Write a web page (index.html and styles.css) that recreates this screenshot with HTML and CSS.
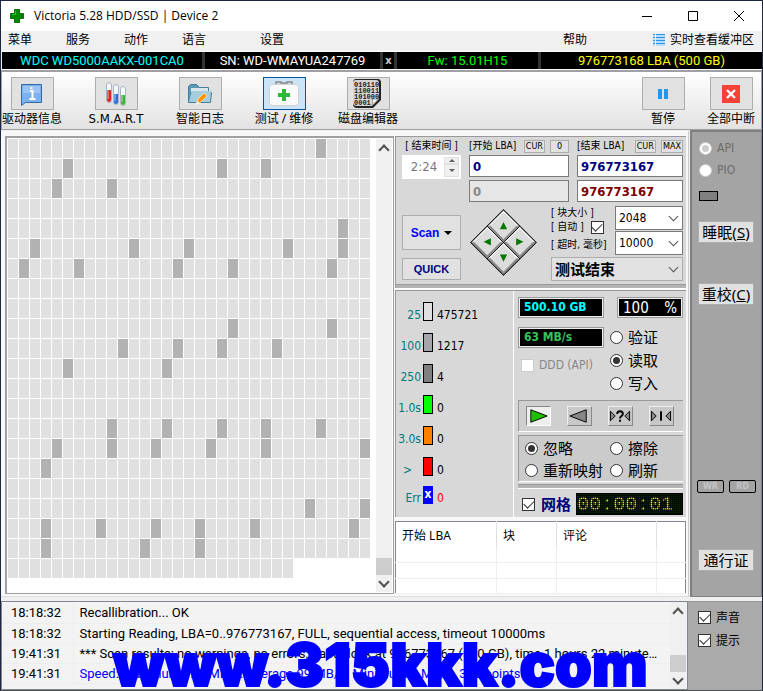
FILE: index.html
```html
<!DOCTYPE html>
<html lang="zh-CN">
<head>
<meta charset="utf-8">
<title>Victoria 5.28 HDD/SSD | Device 2</title>
<link rel="stylesheet" href="styles.css">
</head>
<body>
<header class="titlebar">
  <svg class="app-icon" viewBox="0 0 14 14"><path d="M4.500 .5h5v4h4v5h-4v4h-5v-4h-4v-5h4z" fill="#008a00" stroke="#087008"/><path d="M5.500 2v3.500H2" fill="none" stroke="#30c030"/></svg>
  <h1>Victoria 5.28 HDD/SSD | Device 2</h1>
  <div class="window-buttons">
    <button aria-label="最小化"><svg viewBox="0 0 12 12"><path d="M1 6.500h10" /></svg></button>
    <button aria-label="最大化"><svg viewBox="0 0 12 12"><path d="M1.500 1.500h9v9h-9z"/></svg></button>
    <button aria-label="关闭"><svg viewBox="0 0 12 12"><path d="M1 1l10 10M11 1L1 11"/></svg></button>
  </div>
</header>

<nav class="menu">
  <a href="#">菜单</a><a href="#">服务</a><a href="#">动作</a><a href="#">语言</a><a href="#" class="settings">设置</a>
  <a href="#" class="help">帮助</a>
  <a href="#" class="buffer"><svg viewBox="0 0 12 12"><path d="M0 .5h2M0 3.500h2M0 6.500h2M0 9.500h2M3 .5h9M3 3.500h9M3 6.500h9M3 9.500h9" stroke="#2196f3" stroke-width="1"/><path d="M3 2h9M3 5h9M3 8h9M3 11h9M0 2h2M0 5h2M0 8h2M0 11h2" stroke="#8cc6f5"/></svg>实时查看缓冲区</a>
</nav>

<section class="drive">
  <span class="model">WDC WD5000AAKX-001CA0</span>
  <span class="serial">SN: WD-WMAYUA247769</span>
  <button class="clear">x</button>
  <span class="firmware">Fw: 15.01H15</span>
  <span class="capacity">976773168 LBA (500 GB)</span>
</section>

<section class="toolbar">
  <button class="tool"><span class="tile"><svg viewBox="0 0 24 24"><path d="M1.500 2.500h20v18h-16l-4 3z" fill="#7db0ee" stroke="#34699f"/><path d="M3 4h17v7H3z" fill="#9bc4f5"/><path d="M10 9h2.500v8M9.500 17h6" fill="none" stroke="#fff" stroke-width="2"/><path d="M10.500 5h2v2h-2z" fill="#fff"/></svg></span>驱动器信息</button>
  <button class="tool latin"><span class="tile"><svg viewBox="0 0 24 24"><g stroke="#aab4c4"><rect x="2.500" y=".5" width="5" height="20" rx="2.500" fill="#f4f4fa"/><rect x="9.500" y="2.500" width="5" height="20" rx="2.500" fill="#eef4ff"/><rect x="16.500" y="4.500" width="5" height="19" rx="2.500" fill="#f4fff4"/></g><path d="M3 8h4v10a2 2 0 0 1-4 0z" fill="#d82828"/><path d="M10 12h4v8a2 2 0 0 1-4 0z" fill="#2c70d8"/><path d="M17 13h4v8a2 2 0 0 1-4 0z" fill="#3bb634"/><path d="M4 2v15M11 4v15M18 6v14" stroke="#fff" opacity=".6"/></svg></span>S.M.A.R.T</button>
  <button class="tool"><span class="tile"><svg viewBox="0 0 24 24"><path d="M.5 20.500v-16l2-2h6l3 3h9v5h3l-1 10z" fill="#5a98b8" stroke="#43809e"/><path d="M3 6h17v4H3z" fill="#d8e6ea"/><path d="M1 20L4 9h19l-1 11z" fill="#a5cdde"/><path d="M8 23l2-6 6-6 3 3-6 6z" fill="#ff9300" stroke="#fff" stroke-width=".6"/><path d="M8 23l1-4 3 2z" fill="#fff2d6"/></svg></span>智能日志</button>
  <button class="tool selected"><span class="tile"><svg class="wide" viewBox="0 0 32 28"><path d="M8 5V2h5v1h6V2h5v3" fill="none" stroke="#888" stroke-width="1.500"/><rect x="1.500" y="4.500" width="29" height="21" rx="3" fill="#fafafa" stroke="#d2d2d2"/><path d="M14 9h4v4h4v4h-4v4h-4v-4h-4v-4h4z" fill="#2eb83a"/></svg></span>测试 / 维修</button>
  <button class="tool"><span class="tile"><svg class="wide" viewBox="0 0 32 30"><path d="M4 0h22q3 0 3 4v17l-8 8H5q-4 0-4-4V4q0-4 3-4z" fill="#222"/><path d="M4 1h20q3 0 3 3v16l-7 7H5q-4 0-4-3V4q0-3 3-3z" fill="#d5d5d5"/><path d="M20 27q2-4 0-7 4 1 7-1z" fill="#fff" stroke="#666" stroke-width=".6"/><g class="bits"><text x="2" y="8">010110</text><text x="2" y="14">110011</text><text x="2" y="20">101000</text><text x="2" y="26">0001</text></g></svg></span>磁盘编辑器</button>
  <div class="tools-right">
    <button class="tool"><span class="tile"><svg class="small" viewBox="0 0 20 20"><path d="M5 5h4v10H5zM11 5h4v10h-4z" fill="#2196f3"/></svg></span>暂停</button>
    <button class="tool"><span class="tile"><svg class="small" viewBox="0 0 20 20"><path d="M1 1h18v18H1z" fill="#f44336"/><path d="M6 6l8 8M14 6l-8 8" stroke="#fff" stroke-width="2.400"/></svg></span>全部中断</button>
  </div>
</section>

<main class="work">
  <div class="stage">
    <section class="map">
      <div class="cells" id="cells"></div>
      <div class="scroll"><i class="up"></i><b></b><i class="down"></i></div>
    </section>

    <div class="side">
      <section class="setup">
        <div class="range">
          <label class="cap" for="end-time">[ 结束时间 ]</label>
          <div class="cap-row"><label for="start-lba">[开始 LBA]</label><button>CUR</button><button class="zero">0</button></div>
          <div class="cap-row"><label for="end-lba">[结束 LBA]</label><button>CUR</button><button>MAX</button></div>
          <div class="spin"><input id="end-time" value="2:24" disabled><span><button aria-label="增加" class="inc"></button><button aria-label="减少" class="dec"></button></span></div>
          <input id="start-lba" class="field" value="0">
          <input id="end-lba" class="field" value="976773167">
          <input class="field off second" value="0" disabled aria-label="当前 LBA">
          <input class="field red" value="976773167" aria-label="末尾 LBA">
        </div>
        <div class="actions">
          <div class="runs">
            <button class="scan">Scan<i></i></button>
            <button class="quick">QUICK</button>
          </div>
          <div class="pad">
            <div class="pad-keys">
              <button aria-label="上"><svg class="n" viewBox="0 0 10 10"><path d="M5 1l4 8H1z"/></svg></button>
              <button aria-label="右"><svg class="e" viewBox="0 0 10 10"><path d="M5 1l4 8H1z"/></svg></button>
              <button aria-label="左"><svg class="w" viewBox="0 0 10 10"><path d="M5 1l4 8H1z"/></svg></button>
              <button aria-label="下"><svg class="s" viewBox="0 0 10 10"><path d="M5 1l4 8H1z"/></svg></button>
            </div>
          </div>
          <div class="options">
            <div class="option-labels">
              <label for="block">[ 块大小 ]</label>
              <label class="auto">[ 自动 ]<input type="checkbox" checked></label>
              <label for="timeout">[ 超时, 毫秒]</label>
            </div>
            <div class="option-values">
              <span class="pick"><select id="block"><option>2048</option></select></span>
              <span class="pick"><select id="timeout"><option>10000</option></select></span>
            </div>
            <span class="pick finish"><select aria-label="完成后"><option>测试结束</option></select></span>
          </div>
        </div>
        <div class="rule"></div>
      </section>

      <section class="status">
        <ul class="timing">
          <li><span>25</span><i class="t25"></i><b>475721</b></li>
          <li><span>100</span><i class="t100"></i><b>1217</b></li>
          <li><span>250</span><i class="t250"></i><b>4</b></li>
          <li><span>1.0s</span><i class="t1"></i><b>0</b></li>
          <li><span>3.0s</span><i class="t3"></i><b>0</b></li>
          <li><span class="over">&gt;</span><i class="tover"></i><b>0</b></li>
          <li class="err"><span>Err</span><i>x</i><b>0</b></li>
        </ul>
        <div class="readout">
          <div class="top">
            <div class="left">
              <output class="lcd size">500.10 GB</output>
              <output class="lcd speed">63 MB/s</output>
              <label class="ddd"><input type="checkbox" disabled>DDD (API)</label>
            </div>
            <div class="right">
              <output class="lcd percent"><span>100</span><span>%</span></output>
              <label><input type="radio" name="op">验证</label>
              <label><input type="radio" name="op" checked>读取</label>
              <label><input type="radio" name="op">写入</label>
            </div>
          </div>
          <div class="transport">
            <button class="pressed" aria-label="正向"><svg viewBox="0 0 24 18"><path d="M4 2.500l17 6.500-17 6.500z" fill="#20c000" stroke="#000"/></svg></button>
            <button aria-label="反向"><svg viewBox="0 0 24 18"><path d="M19 2.500L2 9l17 6.500z" fill="#868686" stroke="#000"/></svg></button>
            <button aria-label="随机"><svg viewBox="0 0 24 18"><path d="M1.500 4v10l5-5zM21.500 4v10l-5-5z" fill="#868686" stroke="#000"/><path d="M8.500 7q0-3 3-3t3 3q0 1-2 2.500-1 .7-1 2M11.500 13v2" fill="none" stroke="#000" stroke-width="2"/></svg></button>
            <button aria-label="蝶式"><svg viewBox="0 0 24 18"><path d="M1.500 4v10l5-5zM21.500 4v10l-5-5z" fill="#868686" stroke="#000"/><path d="M11.500 4v10" stroke="#000" stroke-width="2"/></svg></button>
          </div>
          <div class="defects">
            <label><input type="radio" name="defect" checked>忽略</label>
            <label><input type="radio" name="defect">擦除</label>
            <label><input type="radio" name="defect">重新映射</label>
            <label><input type="radio" name="defect">刷新</label>
          </div>
          <div class="rule"></div>
          <div class="clock-row">
            <label><input type="checkbox" checked>网格</label>
            <output class="clock">00:00:01</output>
          </div>
        </div>
      </section>

      <table class="defect-list">
        <colgroup><col class="c1"><col class="c2"><col class="c3"><col></colgroup>
        <thead><tr><th>开始 LBA</th><th>块</th><th>评论</th><th></th></tr></thead>
        <tbody><tr><td></td><td></td><td></td><td></td></tr><tr><td></td><td></td><td></td><td></td></tr><tr><td></td><td></td><td></td><td></td></tr></tbody>
      </table>
    </div>
  </div>

  <aside class="rail">
    <label><input type="radio" name="bus" checked disabled>API</label>
    <label><input type="radio" name="bus" disabled>PIO</label>
    <div class="lamp"></div>
    <button class="sleep">睡眠(<u>S</u>)</button>
    <button class="recal">重校(<u>C</u>)</button>
    <div class="leds"><span>WR</span><span>RD</span></div>
    <button class="pass">通行证</button>
  </aside>
</main>

<footer class="bottom">
  <section class="log">
    <table>
      <colgroup><col class="time"><col></colgroup>
      <tbody>
      <tr><td>18:18:32</td><td>Recallibration... OK</td></tr>
      <tr><td>18:18:32</td><td>Starting Reading, LBA=0..976773167, FULL, sequential access, timeout 10000ms</td></tr>
      <tr><td>19:41:31</td><td>*** Scan results: no warnings, no errors. Last block at 976773167 (500 GB), time 1 hours 22 minutes 58 seconds.</td></tr>
      <tr class="speed-row"><td>19:41:31</td><td>Speed: Maximum 125 MB/s. Average 99 MB/s. Minimum 2 MB/s. 388 points.</td></tr>
      </tbody>
    </table>
    <div class="scroll"><i class="up"></i><b></b><i class="down"></i></div>
    <div class="site">www.315kkk.com</div>
  </section>
  <div class="toggles">
    <label><input type="checkbox" checked>声音</label>
    <label><input type="checkbox" checked>提示</label>
  </div>
</footer>
<script src="map.js"></script>
</body>
</html>
```
FILE: styles.css
```css
* { box-sizing: border-box; }
html { --ui: "DejaVu Sans Condensed", "Noto Sans", "Noto Sans CJK SC", sans-serif; --text: Roboto, "Noto Sans CJK SC", sans-serif; --cjk: "Noto Sans", "Noto Sans CJK SC", sans-serif; --edge: #a0a0a4; }
body {
  margin: 0; min-height: 100vh; display: flex; flex-direction: column;
  background: #f0f0f0; border: 1px solid #1c2740; border-bottom-color: #4a4f50;
  font: 12px/16px var(--ui); color: #000;
}
button, input, select { font: inherit; color: inherit; margin: 0; padding: 0; border-radius: 0; }
button { background: #e1e1e1; border: 1px solid #adadad; }
h1, ul { margin: 0; padding: 0; list-style: none; }
a { color: inherit; text-decoration: none; }
i, b { font-style: normal; font-weight: normal; }
table { border-collapse: collapse; table-layout: fixed; width: 100%; }

/* title bar */
.titlebar { display: flex; align-items: center; height: 30px; background: #fff; padding-left: 9px; }
.app-icon { width: 14px; height: 14px; margin-right: 10px; }
h1 { font: 12px/16px "Open Sans", sans-serif; }
.window-buttons { display: flex; margin-left: auto; }
.window-buttons button { width: 46px; height: 28px; border: 0; background: none; display: grid; place-items: center; }
.window-buttons svg { width: 12px; height: 12px; fill: none; stroke: #000; }

/* menu */
.menu { display: flex; align-items: center; gap: 34px; height: 20px; padding: 0 8px 2px 7px; font-family: var(--cjk); }
.menu .settings { margin-left: 20px; }
.menu .help { margin-left: auto; }
.menu .buffer { display: flex; align-items: center; gap: 5px; margin-left: 32px; }
.buffer svg { width: 12px; height: 12px; }

/* drive line */
.drive {
  display: grid; grid-template-columns: 200px 175px 11px 141px 1fr; column-gap: 3px; height: 19px;
  margin-left: 1px; background: #333; border-top: 1px solid #fff; border-bottom: 1px solid #fff; font: 13px/17px var(--text);
}
.drive > * { background: #000; text-align: center; border: 0; white-space: nowrap; }
.model { color: #0ff; }
.serial { color: #fff; }
.clear { color: #ccc; font: bold 11px/16px var(--ui); }
.firmware { color: #0f0; }
.capacity { color: #ff0; }

/* toolbar */
.toolbar {
  display: flex; gap: 24px; height: 60px; padding: 5px 6px 0 0;
  background: linear-gradient(#fff, #e2e2e2); border: solid var(--edge); border-width: 2px 1px 1px;
}
.tool { width: 60px; height: 52px; display: flex; flex-direction: column; align-items: center; background: none; border: 0; font: 12px/18px var(--cjk); white-space: nowrap; }
.tool.latin { font-size: 13px; font-family: var(--ui); }
.tile { display: grid; place-items: center; width: 43px; height: 33px; background: #e1e1e1; border: 1px solid #adadad; flex: none; }
.selected .tile { background: #cce4f7; border-color: #0054a0; }
.tile svg { width: 24px; height: 24px; }
.tile svg.wide { width: 32px; height: 30px; }
.tile svg.small { width: 20px; height: 20px; }
.bits { font: bold 7px "Liberation Mono", monospace; fill: #222; }
.tools-right { display: flex; gap: 20px; margin-left: auto; }
.tools-right .tool { width: 48px; }

/* work area */
.work { display: flex; flex: 1; margin-bottom: 4px; }
.stage { flex: 1; display: flex; gap: 1px; padding: 5px 2px 2px 4px; margin: 1px 1px 0 0; background: #f8f8f8; border-right: 1px solid #ccc; border-bottom: 1px solid #ddd; min-width: 0; }
.map { flex: 1; display: flex; align-items: stretch; padding: 1px; background: #fff; border: 1px solid var(--edge); border-width: 2px 1px 1px 2px; }
.cells { flex: 1; display: grid; grid-template-columns: repeat(33, 1fr); grid-auto-rows: 19px; gap: 1px; align-content: start; margin-right: 6px; }
.cells i { background: #e0e0e0; }
.cells .slow { background: #b2b2b2; }
.scroll { width: 16px; display: flex; flex-direction: column; align-items: center; background: #f0f0f0; flex: none; }
.scroll b { width: 16px; height: 17px; margin-top: auto; background: #cdcdcd; }
.scroll i { height: 17px; width: 16px; display: grid; place-items: center; }
.scroll i::before { content: ""; width: 6px; height: 6px; border: solid #505050; border-width: 2px 0 0 2px; transform: rotate(45deg); margin-top: 4px; }
.scroll .down::before { border-width: 0 2px 2px 0; margin: 0 0 4px; }

.side { width: 291px; flex: none; display: flex; flex-direction: column; }
.setup, .status { background: #d8d8d8; border: solid #999; border-width: 1px 0 0 1px; }
.setup { padding-top: 3px; margin-bottom: 2px; }
.rule { height: 4px; background: #b4b4b4; border-top: 1px solid #999; box-shadow: 0 1px #fff; }

.range { display: grid; grid-template-columns: 59px 100px 106px; column-gap: 8px; row-gap: 3px; padding: 0 3px 0 6px; align-items: start; }
.cap, .cap-row { font-size: 10px; line-height: 12px; height: 12px; white-space: nowrap; }
.cap { text-align: center; }
.cap-row { display: flex; }
.cap-row label { margin-right: auto; }
.cap-row button { min-width: 19px; height: 13px; padding: 0 1px; margin-left: 5px; font-size: 9px; line-height: 11px; }
.field { width: 100%; height: 22px; padding: 0 3px; border: 1px solid #7a7a7a; background: #fff; font-size: 13px; font-weight: bold; color: #000080; }
.off { background: #e6e6e6; color: #888; }
.second { grid-column: 2; }
.red { color: #800000; }
.spin { display: flex; height: 24px; padding: 2px; background: #fff; margin-bottom: -2px; }
.spin input { flex: 1; min-width: 0; width: 10px; border: 0; background: none; color: #777; font-size: 13px; text-align: center; }
.spin span { display: grid; width: 15px; }
.spin button { border-color: #e0e0e0; background: #f0f0f0; display: grid; place-items: center; }
.spin button::before { content: ""; border: 3px solid transparent; border-bottom-color: #606060; margin-top: -3px; }
.spin .dec::before { border-bottom-color: transparent; border-top-color: #606060; margin: 3px 0 0; }

.actions { display: grid; grid-template-columns: 59px 67px 1fr; column-gap: 9px; padding: 4px 3px 3px 6px; }
.runs { display: flex; flex-direction: column; justify-content: space-between; padding: 9px 0 1px; }
.scan, .quick { font-family: "Liberation Sans", sans-serif; font-weight: bold; }
.scan { height: 35px; font-size: 12px; color: #00f; display: flex; align-items: center; justify-content: center; gap: 5px; }
.scan i { border: 4px solid transparent; border-top-color: #000; border-bottom: 0; }
.quick { height: 22px; font-size: 11px; color: #000080; }
.pad { height: 67px; display: grid; place-items: center; margin-top: 3px; }
.pad-keys { width: 47px; height: 47px; display: grid; grid-template-columns: 1fr 1fr; gap: 1px; transform: rotate(45deg); background: #000; border: 1px solid #222; }
.pad-keys button { background: #dcdcdc; border: solid; border-width: 1px 2px 2px 1px; border-color: #fff #888 #888 #fff; display: grid; place-items: center; }
.pad-keys svg { width: 9px; height: 9px; fill: #007800; transform: rotate(-45deg); }
.pad-keys .e { transform: rotate(45deg); }
.pad-keys .w { transform: rotate(-135deg); }
.pad-keys .s { transform: rotate(135deg); }

.options { display: grid; grid-template-columns: 64px 68px; justify-content: end; row-gap: 2px; }
.option-labels { font-size: 10px; line-height: 14px; white-space: nowrap; display: flex; flex-direction: column; }
.option-labels .auto { display: flex; align-items: center; gap: 7px; height: 14px; margin-bottom: 4px; }
.option-values { display: grid; gap: 1px; }
.pick { position: relative; display: block; }
.pick select { appearance: none; display: block; width: 100%; height: 24px; padding: 0 18px 0 3px; background: #fff; border: 1px solid #7a7a7a; }
.pick::after { content: ""; position: absolute; right: 6px; top: 7px; width: 6px; height: 6px; border: solid #555; border-width: 0 1px 1px 0; transform: rotate(45deg); }
.finish { grid-column: 1 / 3; }
.finish select { background: #e1e1e1; border-color: #adadad; font: bold 15px/20px var(--cjk); }

/* check boxes and radios */
input[type="checkbox"], input[type="radio"] { appearance: none; flex: none; width: 13px; height: 13px; background: #fff; border: 1px solid #333; display: grid; place-items: center; }
input[type="radio"] { border-radius: 50%; }
input[type="checkbox"]:checked::before { content: ""; width: 9px; height: 5px; border: solid #333; border-width: 0 0 1px 1px; transform: rotate(-45deg); margin-top: -3px; }
input[type="radio"]:checked::before { content: ""; width: 7px; height: 7px; border-radius: 50%; background: #333; }
input[type="checkbox"]:disabled, input[type="radio"]:disabled { border-color: #ccc; }
input[type="radio"]:disabled:checked::before { background: #ccc; }

/* status */
.status { display: flex; flex: none; }
.timing { width: 118px; padding-top: 5px; border-right: 1px solid #fff; }
.timing li { height: 31px; display: grid; grid-template-columns: 25px 10px 1fr; column-gap: 2px; align-items: center; }
.timing span { color: #007878; text-align: right; padding-top: 6px; }
.timing .over { padding-right: 9px; }
.timing i { height: 19px; border: 1px solid #000; }
.timing b { padding: 6px 0 0 2px; }
.t25 { background: #e0e0e0; } .t100 { background: #a4a4aa; } .t250 { background: #808080; }
.t1 { background: #0f0; } .t3 { background: #ff8000; } .tover { background: #f00; }
.timing .err { height: 26px; }
.timing .err i { background: #00f; color: #fff; border: 0; height: 18px; font-weight: bold; text-align: center; }
.timing .err b { color: #f00; }

.readout { flex: 1; padding: 6px 3px 2px 4px; }
.top { display: flex; justify-content: space-between; height: 103px; }
.left { width: 86px; display: flex; flex-direction: column; gap: 9px; }
.lcd { display: block; height: 21px; padding: 0 5px; line-height: 19px; background: #000; border: 1px solid #999; box-shadow: inset 0 0 0 1px #eee; }
.size, .speed { font-weight: bold; font-size: 12px; color: #0ff; }
.speed { color: #35c35b; }
.ddd { display: flex; align-items: center; gap: 5px; padding-left: 3px; color: #888; white-space: nowrap; }
.right { width: 73px; font: 15px/23px var(--cjk); }
.percent { width: 66px; margin: 0 0 8px auto; display: flex; justify-content: space-between; color: #fff; font: 15px/20px var(--ui); }
.right label, .defects label { display: flex; align-items: center; gap: 5px; }
.transport { display: flex; justify-content: space-between; align-items: center; height: 32px; padding: 0 9px 0 7px; background: #cfcfcf; border: solid; border-width: 1px 0 1px 1px; border-color: #999 #fff #fff #999; }
.transport button { width: 25px; height: 20px; border-color: #eee #888 #888 #eee; background: #c8c8c8; }
.transport .pressed { border-color: #888 #fff #fff #888; background: #eee; }
.transport svg { display: block; width: 23px; height: 18px; }
.defects { display: grid; grid-template-columns: 85px 1fr; margin-top: 3px; padding: 1px 0 0 6px; background: #cbcbcb; border: solid; border-width: 1px 0 1px 1px; border-color: #999 #fff #fff #999; font: 15px/22px var(--cjk); white-space: nowrap; }
.readout .rule { margin-top: 2px; }
.clock-row { display: flex; justify-content: space-between; align-items: center; margin-top: 5px; }
.clock-row label { display: flex; align-items: center; gap: 6px; padding-left: 4px; color: #000080; font: bold 15px/21px var(--cjk); }
.clock { position: relative; width: 107px; height: 22px; background: #042804; color: #ff0; font: 20px/21px "Liberation Mono", monospace; border: 1px solid #000; }
.clock::after { content: ""; position: absolute; inset: 0; background: repeating-linear-gradient(90deg, transparent 0 1px, rgba(0,0,0,.6) 1px 2px), repeating-linear-gradient(transparent 0 1px, rgba(0,0,0,.6) 1px 2px); }

.defect-list { flex: 1; margin-top: 4px; background: #fff; border: 1px solid #828790; font-family: var(--cjk); }
.defect-list .c1 { width: 101px; } .defect-list .c2 { width: 60px; } .defect-list .c3 { width: 100px; }
.defect-list th { height: 26px; font-weight: normal; text-align: left; padding: 2px 6px 0; border-right: 1px solid #e0e0e0; }
.defect-list td { height: 14px; padding: 0; border: solid #eee; border-width: 0 1px 1px 0; }
.defect-list th:last-child, .defect-list td:last-child { border-right: 0; }

/* right rail */
.rail { width: 72px; display: flex; flex-direction: column; align-items: flex-start; padding: 5px 7px 25px; background: #a4a4a4; border: 2px solid #808080; border-width: 2px 1px 1px 2px; color: #6c6c6c; }
.rail label { display: flex; align-items: center; gap: 5px; height: 22px; }
.rail button { width: 56px; height: 22px; color: #000; font: 15px/20px var(--cjk); white-space: nowrap; margin-left: -1px; }
.lamp { width: 19px; height: 10px; margin-top: 10px; background: #808080; border: 1px solid #000; }
.sleep { margin-top: 20px; }
.recal { margin-top: 40px; }
.leds { display: flex; gap: 5px; margin: auto -2px 56px -2px; }
.leds span { width: 27px; height: 13px; border: 1px solid #000; border-radius: 2px; color: #c4c4c4; font: bold 9px/11px var(--ui); text-align: center; }

/* log */
.bottom { display: flex; height: 89px; }
.log { position: relative; flex: 1; display: flex; min-width: 0; background: #f3f3f3; border: 1px solid #828790; padding-right: 1px; font: 13px/18px var(--text); }
.log table { flex: 1; width: 10px; margin: 1px 0 auto; }
.log .time { width: 71px; }
.log td { height: 20px; padding: 1px 10px 0 6px; white-space: nowrap; overflow: hidden; text-overflow: ellipsis; border-bottom: 1px solid #eee; }
.log td:first-child { padding: 1px 0 0 9px; border-right: 1px solid #eee; }
.log .speed-row td:last-child { color: #00f; }
.log .scroll { width: 16px; }
.site { position: absolute; left: 111px; bottom: 0; font: 900 59px/48px Inter, sans-serif; color: #00f; -webkit-text-stroke: 2px #00f; white-space: nowrap; }
.toggles { width: 74px; padding: 4px 0 0 10px; background: #aaa; border-top: 1px solid #999; }
.toggles label { display: flex; align-items: center; gap: 5px; height: 23px; font-family: var(--cjk); }
```
FILE: map.js
```js
// Columns of slower blocks, one entry per row of the surface map
const slowByRow = [
  [28], [5, 19, 23], [4, 9], [], [30], [2, 11, 16, 25, 30], [1, 6, 15, 20, 29],
  [], [], [20, 29], [10, 15, 19, 24], [5, 14], [], [], [9, 14, 19, 23, 28],
  [4, 9, 13, 18, 23, 32], [3], [], [27, 32], [3, 8, 13, 17, 22, 31], [3, 12, 17], []
];
const columns = 33;
const lastRowColumns = 26;
const cells = document.getElementById("cells");

slowByRow.forEach((slow, row) => {
  const count = row === slowByRow.length - 1 ? lastRowColumns : columns;
  for (let column = 0; column < count; column++) {
    const cell = document.createElement("i");
    if (slow.includes(column)) cell.className = "slow";
    cells.append(cell);
  }
});
```
